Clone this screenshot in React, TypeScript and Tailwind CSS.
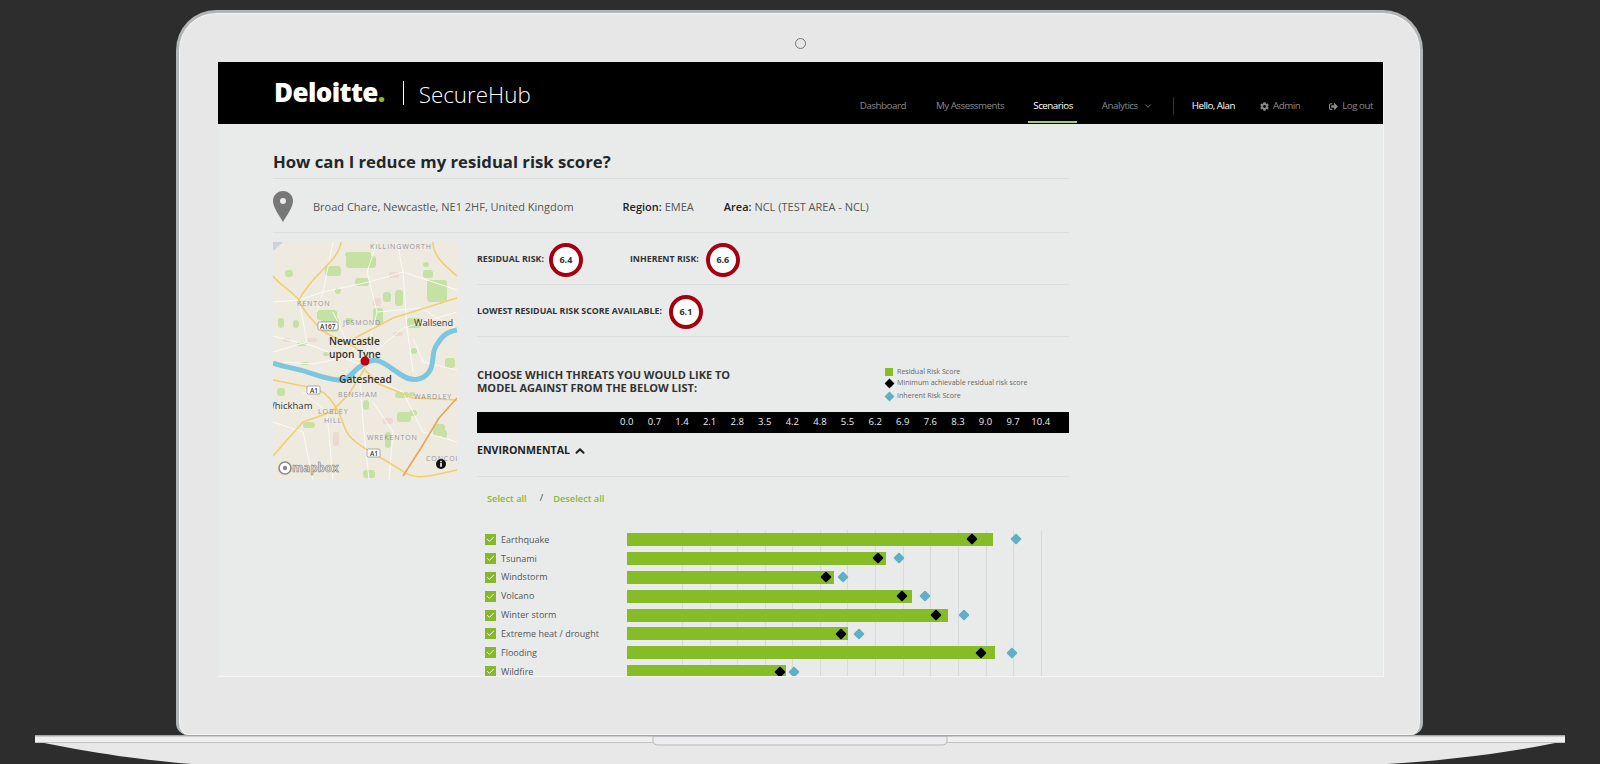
import { Check, ChevronDown, ChevronUp } from 'lucide-react';
import { FaCog, FaSignOutAlt } from 'react-icons/fa';

const ticks = ['0.0', '0.7', '1.4', '2.1', '2.8', '3.5', '4.2', '4.8', '5.5', '6.2', '6.9', '7.6', '8.3', '9.0', '9.7', '10.4'];
const gridLines = [55, 83, 110, 138, 165, 193, 220, 248, 276, 303, 331, 359, 386, 414];

// bar end, black marker and blue marker, in px from the start of the track
const threats = [
    { name: 'Earthquake', bar: 366, min: 345, inherent: 389 },
    { name: 'Tsunami', bar: 259, min: 251, inherent: 272 },
    { name: 'Windstorm', bar: 207, min: 199, inherent: 216 },
    { name: 'Volcano', bar: 285, min: 275, inherent: 298 },
    { name: 'Winter storm', bar: 321, min: 309, inherent: 337 },
    { name: 'Extreme heat / drought', bar: 221, min: 214, inherent: 232 },
    { name: 'Flooding', bar: 368, min: 354, inherent: 385 },
    { name: 'Wildfire', bar: 159, min: 153, inherent: 167 },
];

function ScoreCircle({ value }: { value: string }) {
    return (
        <div className="flex h-[34px] w-[34px] items-center justify-center rounded-full border-[4px] border-[#a5000f] bg-white text-[9px] font-bold text-[#333]">
            {value}
        </div>
    );
}

function Diamond({ left, color }: { left: number; color: string }) {
    return (
        <div className={`absolute top-1/2 h-[8px] w-[8px] rounded-[1px] ${color}`} style={{ left, transform: 'translate(-50%, -50%) rotate(45deg)' }} />
    );
}

function MapPicture() {
    const label = { fill: '#8f93a6', fontSize: 7, letterSpacing: 0.9, fontWeight: 400 };
    const place = { fill: '#333', fontSize: 10.2, fontWeight: 600 };
    const greens = [
        [72, 10, 26, 5], [73, 14, 30, 12], [52, 24, 16, 10], [82, 36, 14, 8], [12, 28, 8, 7], [154, 38, 20, 22], [150, 28, 10, 8],
        [134, 76, 14, 10], [44, 68, 20, 10], [48, 76, 18, 14], [110, 50, 8, 10], [122, 48, 8, 16], [100, 66, 10, 16],
        [20, 78, 6, 8], [122, 150, 14, 6], [124, 170, 14, 10], [90, 158, 6, 10], [160, 182, 12, 12], [112, 190, 6, 16],
        [90, 228, 12, 8], [172, 116, 10, 10], [28, 120, 8, 3], [50, 110, 6, 4], [136, 150, 6, 4], [4, 146, 8, 8],
        [30, 180, 12, 6], [136, 168, 8, 6], [168, 188, 6, 8], [72, 76, 8, 6], [94, 94, 6, 8], [150, 20, 6, 5], [5, 76, 6, 10],
        [138, 106, 6, 6], [24, 100, 10, 4], [62, 46, 6, 6],
    ];
    const pale = [[116, 30, 10, 6], [100, 56, 8, 8], [110, 176, 10, 6], [10, 96, 8, 4], [120, 90, 10, 4], [34, 96, 10, 4], [60, 190, 6, 14]];
    return (
        <svg viewBox="0 0 184 238" className="h-[238px] w-[184px] shrink-0 bg-[#efeadf]">
            <path d="M0 0h10l-10 9z" fill="#c9d3dc" />
            {pale.map(([x, y, w, h], i) => (
                <rect key={i} x={x} y={y} width={w} height={h} rx={2} fill="#ecd9d2" />
            ))}
            {greens.map(([x, y, w, h], i) => (
                <rect key={i} x={x} y={y} width={w} height={h} rx={3} fill="#c5e2a4" />
            ))}
            <g fill="none" stroke="#fbfbf8" strokeWidth="0.9">
                <path d="M0 94 40 104 86 122 90 180 96 238" />
                <path d="M104 0 94 30 104 70 92 118" />
                <path d="M26 58 50 50 96 40 130 30 184 48" />
                <path d="M0 60 26 58 34 100 0 110" />
                <path d="M92 118 130 86 184 70" />
                <path d="M96 135 130 150 150 190 184 200" />
                <path d="M60 70 74 100 92 118" />
                <path d="M124 0 130 30 134 86 140 130" />
                <path d="M30 150 54 170 60 238" />
                <path d="M100 160 120 190 116 238" />
                <path d="M10 120 40 122 70 116 92 118" />
                <path d="M140 96 150 120 184 128" />
                <path d="M0 180 30 190 40 238" />
                <path d="M60 0 50 50 44 70" />
                <path d="M104 70 148 66 184 88" />
            </g>
            <path d="M0 121C14 126 22 126 34 130S56 138 66 138 78 132 84 127 98 116 106 119 120 128 130 134 150 138 156 130 158 112 163 104 172 90 184 88" fill="none" stroke="#7cc6df" strokeWidth="5" />
            <g fill="none" stroke="#f0cf74" strokeWidth="1.6">
                <path d="M68 0C66 20 40 30 26 58 20 50 8 44 0 34" />
                <path d="M26 58C30 70 40 78 48 88 60 96 76 100 92 112" />
                <path d="M82 96 120 76 184 56" />
                <path d="M160 0C160 14 172 24 184 34" />
                <path d="M0 138 40 146C58 150 66 170 72 186 76 200 96 208 128 228 140 238 150 236 184 228" />
                <path d="M92 128 106 142 140 156 184 158" />
                <path d="M92 126 76 152 58 170 30 180 0 214" />
            </g>
            <path d="M130 234 148 206 166 176 184 156" fill="none" stroke="#e9a45a" strokeWidth="1.6" />
            <text x="97" y="7" {...label}>KILLINGWORTH</text>
            <text x="24" y="64" {...label}>KENTON</text>
            <text x="70" y="83" {...label}>JESMOND</text>
            <text x="65" y="155" {...label}>BENSHAM</text>
            <text x="141" y="157" {...label}>WARDLEY</text>
            <text x="45" y="172" {...label}>LOBLEY</text>
            <text x="51" y="181" {...label}>HILL</text>
            <text x="94" y="198" {...label}>WREKENTON</text>
            <text x="153" y="219" {...label}>CONCOI</text>
            <g>
                <rect x="45" y="80" width="20" height="8" rx="1.5" fill="#fff" stroke="#777" strokeWidth="0.6" />
                <text x="47" y="86.5" fill="#333" fontSize="6.5" fontWeight="600">A167</text>
                <rect x="34" y="144" width="13" height="8" rx="1.5" fill="#fff" stroke="#777" strokeWidth="0.6" />
                <text x="37" y="150.5" fill="#333" fontSize="6.5" fontWeight="600">A1</text>
                <rect x="94" y="207" width="13" height="8" rx="1.5" fill="#fff" stroke="#777" strokeWidth="0.6" />
                <text x="97" y="213.5" fill="#333" fontSize="6.5" fontWeight="600">A1</text>
            </g>
            <text x="141" y="84" fill="#333" fontSize="9.2" fontWeight="500">Wallsend</text>
            <text x="56" y="103" {...place}>Newcastle</text>
            <text x="56" y="116" {...place}>upon Tyne</text>
            <text x="66" y="141" {...place}>Gateshead</text>
            <text x="-7" y="167" fill="#333" fontSize="9.500" fontWeight="500">Whickham</text>
            <circle cx="92" cy="119" r="4.5" fill="#c00010" />
            <circle cx="12" cy="226" r="6" fill="#fff" stroke="#8a8a8a" strokeWidth="1.6" />
            <circle cx="12" cy="226" r="2.2" fill="#8a8a8a" />
            <text x="19" y="229.5" fill="#e6e6e6" stroke="#808080" strokeWidth="0.6" fontSize="11.5" fontWeight="700">mapbox</text>
            <circle cx="168" cy="222" r="5" fill="#111" />
            <rect x="167.2" y="221" width="1.6" height="3.8" fill="#fff" />
            <rect x="167.2" y="218.8" width="1.6" height="1.5" fill="#fff" />
        </svg>
    );
}

export default function App() {
    return (
        <div className="h-[764px] w-[1600px] overflow-hidden bg-[#2d2d2d] pt-[10px] font-['Open_Sans',sans-serif] text-[#333]">
            {/* Laptop lid */}
            <div className="ml-[176px] flex h-[725px] w-[1247px] flex-col rounded-t-[40px] rounded-b-[12px] border-[3px] border-b-0 border-[#b1b5b7] bg-[#e7e7e7] pt-[25px] pl-[39px] shadow-[inset_0_0_0_1px_#f4f4f4]">
                <div className="ml-[577px] h-[11px] w-[11px] rounded-full border border-[#777] bg-[#e7e7e7]" />

                {/* Screen */}
                <div className="mt-[13px] h-[615px] w-[1166px] overflow-hidden border-r border-b border-r-[#f4f4f4] border-b-[#f4f4f4] bg-[#e9ebeb]">
                    <header className="flex h-[62px] items-stretch bg-black">
                        <div className="ml-[56px] flex -translate-y-[1px] items-center">
                            <span className="text-[26px] leading-none font-extrabold tracking-[-0.6px] text-white">
                                Deloitte<span className="text-[#86bc25]">.</span>
                            </span>
                            <div className="ml-[18px] h-[24px] w-px translate-y-[1px] bg-white" />
                            <span className="ml-[15px] translate-y-[3px] text-[22.4px] leading-none font-light text-white">SecureHub</span>
                        </div>
                        <nav className="ml-auto flex items-center self-end pr-[10px] pb-[9px] text-[9.8px] tracking-[-0.5px] text-[#8a8a8a]">
                            <span>Dashboard</span>
                            <span className="ml-[30px]">My Assessments</span>
                            <span className="relative ml-[29px] text-white">
                                Scenarios
                                <span className="absolute top-[22px] -left-[5px] h-[2px] w-[49px] bg-[#a5cd5c]" />
                            </span>
                            <span className="ml-[29px]">Analytics</span>
                            <ChevronDown className="ml-[5px] h-[10px] w-[10px]" />
                            <div className="ml-[20px] h-[18px] w-px bg-[#333]" />
                            <span className="ml-[18px] font-medium text-white">Hello, Alan</span>
                            <FaCog className="ml-[25px] h-[9px] w-[9px]" />
                            <span className="ml-[4px]">Admin</span>
                            <FaSignOutAlt className="ml-[29px] h-[9px] w-[9px]" />
                            <span className="ml-[4px]">Log out</span>
                        </nav>
                    </header>

                    <main className="ml-[55px] w-[796px]">
                        <h1 className="flex h-[55px] items-end border-b border-[#dcdede] pb-[4px] text-[16.7px] leading-[24px] font-bold text-[#24272a]">
                            How can I reduce my residual risk score?
                        </h1>

                        <div className="flex h-[54px] items-center border-b border-[#dcdede] text-[11px]">
                            <svg viewBox="0 0 20 31" className="h-[31px] w-[20px] shrink-0 translate-y-[1px]">
                                <path d="M10 0C4.4 0 0 4.4 0 10c0 6.5 7 15.500 10 21 3-5.500 10-14.500 10-21C20 4.400 15.600 0 10 0z" fill="#777" />
                                <circle cx="10" cy="10" r="3" fill="#e9ebeb" />
                            </svg>
                            <div className="flex translate-y-[2px] items-center">
                                <span className="ml-[20px] text-[#555]">Broad Chare, Newcastle, NE1 2HF, United Kingdom</span>
                                <span className="ml-[49px]">
                                    <b className="font-semibold text-[#222]">Region:</b> <span className="text-[#555]">EMEA</span>
                                </span>
                                <span className="ml-[30px]">
                                    <b className="font-semibold text-[#222]">Area:</b> <span className="text-[#555]">NCL (TEST AREA - NCL)</span>
                                </span>
                            </div>
                        </div>

                        <div className="flex items-start">
                            <div className="mt-[9px]">
                                <MapPicture />
                            </div>

                            <div className="ml-[20px] w-[592px]">
                                <div className="flex h-[52px] items-center border-b border-[#dcdede] pt-[2px] text-[8.8px] font-bold text-[#333]">
                                    <span>RESIDUAL RISK:</span>
                                    <div className="ml-[5px]"><ScoreCircle value="6.4" /></div>
                                    <span className="ml-[47px]">INHERENT RISK:</span>
                                    <div className="ml-[7px]"><ScoreCircle value="6.6" /></div>
                                </div>
                                <div className="flex h-[52px] items-center border-b border-[#dcdede] pt-[2px] text-[8.8px] font-bold text-[#333]">
                                    <span>LOWEST RESIDUAL RISK SCORE AVAILABLE:</span>
                                    <div className="ml-[7px]"><ScoreCircle value="6.1" /></div>
                                </div>

                                <div className="flex h-[75px] items-start">
                                    <h2 className="mt-[31px] w-[408px] text-[11px] leading-[13px] font-bold text-[#333]">
                                        CHOOSE WHICH THREATS YOU WOULD LIKE TO
                                        <br />
                                        MODEL AGAINST FROM THE BELOW LIST:
                                    </h2>
                                    <div className="mt-[29px] text-[7.1px] leading-[11px] text-[#666]">
                                        <div className="flex items-center">
                                            <div className="h-[8px] w-[8px] bg-[#86bc25]" />
                                            <span className="ml-[4px]">Residual Risk Score</span>
                                        </div>
                                        <div className="flex items-center">
                                            <div className="ml-[1px] h-[7px] w-[7px] translate-y-[1px] rotate-45 bg-black" />
                                            <span className="ml-[4px]">Minimum achievable residual risk score</span>
                                        </div>
                                        <div className="mt-[2px] flex items-center">
                                            <div className="ml-[1px] h-[7px] w-[7px] translate-y-[1px] rotate-45 bg-[#5fb0c6]" />
                                            <span className="ml-[4px]">Inherent Risk Score</span>
                                        </div>
                                    </div>
                                </div>

                                <div className="flex h-[21px] items-center bg-black pl-[136px] text-[9.5px] font-medium text-[#eee]">
                                    {ticks.map((t) => (
                                        <span key={t} className="w-[27.6px] text-center">{t}</span>
                                    ))}
                                </div>

                                <div className="flex h-[44px] items-center border-b border-[#dcdede] pb-[8px] text-[10.6px] font-bold text-[#222]">
                                    ENVIRONMENTAL
                                    <ChevronUp className="ml-[3px] h-[14px] w-[14px]" strokeWidth={3.5} />
                                </div>

                                <div className="flex h-[53px] items-center pb-[10px] pl-[10px] text-[9.3px] font-semibold text-[#86b83a]">
                                    <span>Select all</span>
                                    <span className="ml-[13px] -translate-y-[1px] font-normal text-[#444]">/</span>
                                    <span className="ml-[10px]">Deselect all</span>
                                </div>

                                {/* Threat chart */}
                                <div className="relative">
                                    <div className="absolute top-0 bottom-[-40px] left-[150px]">
                                        {gridLines.map((x) => (
                                            <div key={x} className="absolute top-0 bottom-0 w-px bg-[#d9dbdb]" style={{ left: x }} />
                                        ))}
                                    </div>
                                    {threats.map((t) => (
                                        <div key={t.name} className="relative flex h-[18.9px] items-center">
                                            <div className="ml-[8px] flex h-[11px] w-[11px] items-center justify-center bg-[#86b82a]">
                                                <Check className="h-[9px] w-[9px] text-white" strokeWidth={2.5} />
                                            </div>
                                            <span className="ml-[5px] w-[126px] text-[9px] whitespace-nowrap text-[#555]">{t.name}</span>
                                            <div className="relative h-[13px] flex-1">
                                                <div className="h-full bg-[#86bc25]" style={{ width: t.bar }} />
                                                <Diamond left={t.min} color="bg-black" />
                                                <Diamond left={t.inherent} color="bg-[#5fb0c6]" />
                                            </div>
                                        </div>
                                    ))}
                                </div>
                            </div>
                        </div>
                    </main>
                </div>
            </div>

            {/* Laptop base, drawn */}
            <svg viewBox="0 0 1600 29" className="block h-[29px] w-[1600px]">
                <path d="M35 6C90 18 150 26 193 29H1387C1440 26 1510 18 1565 6z" fill="#e8e8e8" />
                <rect x="35" y="0" width="1530" height="7" fill="#efefef" />
                <rect x="35" y="0" width="1530" height="1.500" fill="#a3a6a8" />
                <rect x="35" y="7" width="1530" height="1" fill="#c1c3c5" />
                <path d="M653 1v5q0 4 6 4H941q6 0 6-4V1z" fill="#ececee" stroke="#b5b7b9" strokeWidth="1" />
                <rect x="653" y="0" width="294" height="1.500" fill="#a3a6a8" />
            </svg>
        </div>
    );
}
